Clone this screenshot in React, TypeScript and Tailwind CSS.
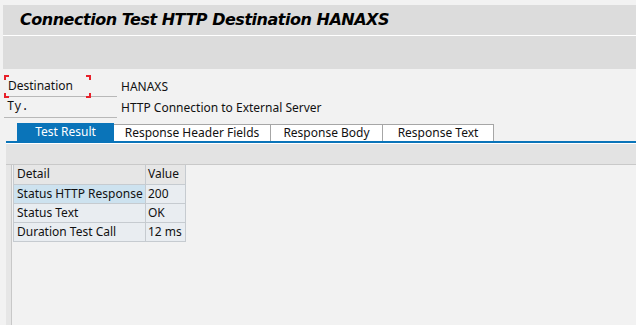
const tabs = ["Test Result", "Response Header Fields", "Response Body", "Response Text"];

const rows = [
  { detail: "Status HTTP Response", value: "200", selected: true },
  { detail: "Status Text", value: "OK" },
  { detail: "Duration Test Call", value: "12 ms" },
];

function FocusCorners() {
  return (
    <div className="pointer-events-none absolute left-0 top-0 h-[23px] w-[87px]">
      <span className="absolute left-0 top-0 h-[5px] w-[5px] border-l-2 border-t-2 border-[#e8202a]" />
      <span className="absolute right-0 top-0 h-[5px] w-[5px] border-r-2 border-t-2 border-[#e8202a]" />
      <span className="absolute bottom-0 left-0 h-[5px] w-[5px] border-b-2 border-l-2 border-[#e8202a]" />
      <span className="absolute bottom-0 right-0 h-[5px] w-[5px] border-b-2 border-r-2 border-[#e8202a]" />
    </div>
  );
}

export default function App() {
  return (
    <div className="h-[325px] w-[636px] overflow-hidden bg-[#f2f2f2] font-['Noto_Sans',sans-serif] text-[12px] text-[#111]">
      {/* title + toolbar */}
      <div className="pl-[3px] pt-[5px]">
        <div className="flex h-[30px] items-center bg-[#dcdcdc] pl-[17px]">
          <h1 className="font-['DejaVu_Sans',sans-serif] text-[16px] font-bold italic tracking-[-0.48px] text-black">
            Connection Test HTTP Destination HANAXS
          </h1>
        </div>
        <div className="h-px bg-white" />
        <div className="h-[33px] bg-[#dcdcdc]" />
      </div>

      {/* fields */}
      <div className="mt-[6px] pl-[4px]">
        <div className="flex h-[22px] items-center">
          <div className="relative flex h-[22px] w-[113px] items-center border-b border-[#b8b8b8] pl-[4px] pt-[1px]">
            <FocusCorners />
            Destination
          </div>
          <span className="pl-[4px] pt-[1px]">HANAXS</span>
        </div>
        <div className="flex h-[21px] items-center">
          <div className="flex h-[21px] w-[113px] items-center border-b border-[#b8b8b8] pl-[3px] font-['Liberation_Mono',monospace]">
            Ty.
          </div>
          <span className="pl-[4px]">HTTP Connection to External Server</span>
        </div>
      </div>

      {/* tabs */}
      <div className="mt-[5px] pl-[6px]">
        <div className="flex h-[18px] items-end pl-[11px]">
          {tabs.map((t, i) =>
            i === 0 ? (
              <div key={t} className="flex h-[18px] w-[97px] items-center justify-center bg-[#0a74b9] text-white">
                {t}
              </div>
            ) : (
              <div
                key={t}
                className={
                  "flex h-[17px] items-center justify-center border-r border-t border-[#a6a6a6] bg-white " +
                  (i === 1 ? "w-[157px]" : i === 2 ? "w-[112px]" : "w-[111px]")
                }
              >
                {t}
              </div>
            )
          )}
        </div>
        <div className="h-[2px] bg-[#0a74b9]" />
        <div className="h-px bg-white" />
        <div className="h-[21px] border-b border-[#c9c9c9] bg-[#e3e3e3]" />

        {/* content */}
        <div className="flex h-[160px]">
          <div className="w-[6px] border-r border-[#c8c8c8] bg-[#e6e6e6]" />
          <div className="pl-[1px]">
            <table className="border-collapse">
              <thead>
                <tr className="h-[19px] bg-[#e6e6e6]">
                  <th className="w-[132px] border border-t-0 border-[#c6cbd0] pl-[3px] text-left font-normal">Detail</th>
                  <th className="w-[40px] border border-t-0 border-[#c6cbd0] pl-[2px] text-left font-normal">Value</th>
                </tr>
              </thead>
              <tbody>
                {rows.map((r) => (
                  <tr key={r.detail} className="h-[19px]">
                    <td
                      className={
                        "border border-[#c6cbd0] pl-[3px] " + (r.selected ? "bg-[#cde2ef]" : "bg-[#e9edf1]")
                      }
                    >
                      {r.detail}
                    </td>
                    <td className="border border-[#c6cbd0] bg-[#e9edf1] pl-[2px]">{r.value}</td>
                  </tr>
                ))}
              </tbody>
            </table>
          </div>
        </div>
      </div>
    </div>
  );
}
